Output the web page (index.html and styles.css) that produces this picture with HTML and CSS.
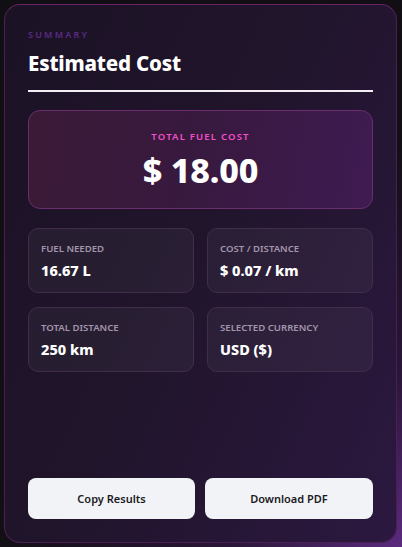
FILE: index.html
```html
<!DOCTYPE html>
<html>
<head>
<meta charset="utf-8">
<link rel="stylesheet" href="styles.css">
</head>
<body>
<div class="card">
  <div class="eyebrow">SUMMARY</div>
  <h1 class="title">Estimated Cost</h1>
  <div class="rule"></div>
  <div class="total">
    <div class="total-label">TOTAL FUEL COST</div>
    <div class="total-value">$ 18.00</div>
  </div>
  <div class="grid">
    <div class="stat"><div class="stat-label">FUEL NEEDED</div><div class="stat-value">16.67 L</div></div>
    <div class="stat"><div class="stat-label">COST / DISTANCE</div><div class="stat-value">$ 0.07 / km</div></div>
    <div class="stat"><div class="stat-label">TOTAL DISTANCE</div><div class="stat-value">250 km</div></div>
    <div class="stat"><div class="stat-label">SELECTED CURRENCY</div><div class="stat-value">USD ($)</div></div>
  </div>
  <div class="spacer"></div>
  <div class="actions">
    <button class="btn">Copy Results</button>
    <button class="btn">Download PDF</button>
  </div>
</div>
</body>
</html>
```
FILE: styles.css
```css
* { box-sizing: border-box; }
html, body { margin: 0; height: 100%; }
body {
  padding: 4px 5px 4px 4px;
  font-family: "Noto Sans", "Open Sans", sans-serif;
  background: radial-gradient(circle at 100% 100%, #5b2a7e 0%, #2a1638 25%, #120f14 60%);
  background-color: #120f14;
}
.card {
  height: 100%;
  display: flex;
  flex-direction: column;
  border: 1px solid #4a2054;
  border-top-color: #6a2466;
  border-radius: 16px;
  background: linear-gradient(115deg, #1c1226 0%, #1f1429 40%, #2c1840 100%);
  padding: 24px 23px 23px 23px;
  color: #fff;
}
.eyebrow {
  font-size: 9px;
  font-weight: 600;
  letter-spacing: 2.2px;
  color: #5a2b82;
  line-height: 12px;
}
.title {
  margin: 9px 0 0 0;
  font-size: 20.5px;
  font-weight: 800;
  line-height: 26px;
  letter-spacing: -0.2px;
}
.rule {
  height: 2px;
  background: #f2eef4;
  margin-top: 14px;
}
.total {
  margin-top: 18px;
  border: 1px solid #6a2d6e;
  border-radius: 12px;
  background: linear-gradient(100deg, #3a1a36 0%, #38193f 50%, #3f1b52 100%);
  padding: 19px 0 19px;
  text-align: center;
}
.total-label {
  font-size: 9.5px;
  font-weight: 600;
  letter-spacing: 1.2px;
  color: #f050c8;
  line-height: 13px;
}
.total-value {
  margin-top: 8px;
  font-size: 34px;
  font-weight: 800;
  line-height: 38px;
  letter-spacing: -0.2px;
}
.grid {
  margin-top: 19px;
  display: grid;
  grid-template-columns: 1fr 1fr;
  gap: 14px 13px;
}
.stat {
  border: 1px solid #3f2d4a;
  border-radius: 10px;
  background: rgba(255,255,255,0.045);
  padding: 14px 12px 12px;
  height: 65px;
}
.stat-label {
  font-size: 9.6px;
  font-weight: 600;
  color: #a396ac;
  line-height: 12px;
}
.stat-value {
  margin-top: 5px;
  font-size: 14.5px;
  font-weight: 800;
  line-height: 20px;
}
.spacer { flex: 1; }
.actions {
  display: grid;
  grid-template-columns: 167px 1fr;
  gap: 10px;
}
.btn {
  height: 41px;
  border: none;
  border-radius: 8px;
  background: #f2f3f6;
  color: #1b1a24;
  font-family: "Noto Sans", "Open Sans", sans-serif;
  font-size: 11px;
  font-weight: 600;
}
```
